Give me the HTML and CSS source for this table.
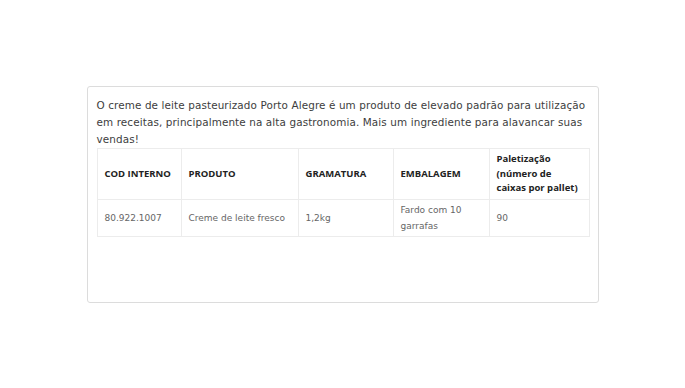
FILE: index.html
```html
<!DOCTYPE html>
<html lang="pt-BR">
<head>
<meta charset="utf-8">
<link rel="stylesheet" href="styles.css">
</head>
<body>
<div class="page">
  <div class="card">
    <p class="intro">O creme de leite pasteurizado Porto Alegre é um produto de elevado padrão para utilização em receitas, principalmente na alta gastronomia. Mais um ingrediente para alavancar suas vendas!</p>
    <table class="spec">
      <colgroup>
        <col class="c1"><col class="c2"><col class="c3"><col class="c4"><col class="c5">
      </colgroup>
      <thead>
        <tr>
          <th>COD INTERNO</th>
          <th>PRODUTO</th>
          <th>GRAMATURA</th>
          <th>EMBALAGEM</th>
          <th>Paletização (número de caixas por pallet)</th>
        </tr>
      </thead>
      <tbody>
        <tr>
          <td>80.922.1007</td>
          <td>Creme de leite fresco</td>
          <td>1,2kg</td>
          <td>Fardo com 10 garrafas</td>
          <td>90</td>
        </tr>
      </tbody>
    </table>
  </div>
</div>
</body>
</html>
```

FILE: styles.css
```css
html, body {
  margin: 0;
  padding: 0;
  background: #fff;
}
body {
  font-family: "DejaVu Sans", "Noto Sans", sans-serif;
}
.page {
  padding-top: 86px;
  display: flex;
  justify-content: center;
}
.card {
  box-sizing: border-box;
  width: 512px;
  height: 217px;
  border: 1px solid #dcdcdc;
  border-radius: 3px;
  padding: 10px 9px;
}
.intro {
  margin: 0;
  font-size: 10.4px;
  letter-spacing: 0.12px;
  line-height: 17px;
  color: #3d3d3d;
}
.spec {
  width: 492px;
  table-layout: fixed;
  border-collapse: collapse;
  margin-top: 0;
}
.c1 { width: 84px; }
.c2 { width: 117px; }
.c3 { width: 95px; }
.c4 { width: 96px; }
.c5 { width: 100px; }
.spec th, .spec td {
  border: 1px solid #ececec;
  text-align: left;
  vertical-align: middle;
  padding: 0 6px 0 7px;
}
.spec th {
  height: 50px;
  font-family: "Open Sans", "Noto Sans", sans-serif;
  font-size: 9.5px;
  font-weight: bold;
  line-height: 14.5px;
  color: #222;
}
.spec td {
  height: 36px;
  font-size: 9px;
  line-height: 16px;
  color: #666;
}
```
